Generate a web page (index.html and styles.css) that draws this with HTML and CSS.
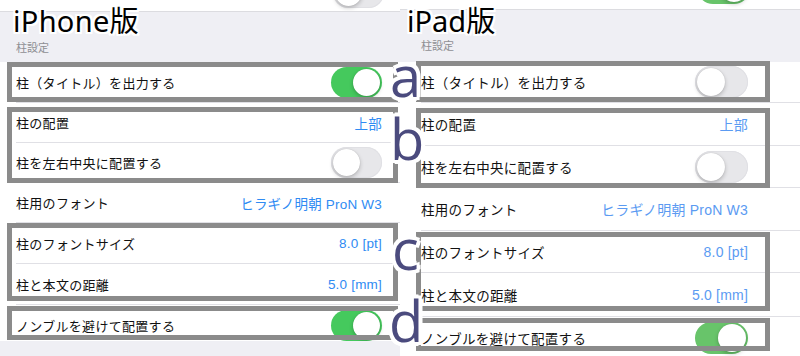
FILE: index.html
```html
<!DOCTYPE html>
<html lang="ja">
  <head>
    <meta charset="UTF-8" />
    <meta name="viewport" content="width=device-width, initial-scale=1.0" />
    <title>柱設定 iPhone / iPad</title>
    <link rel="stylesheet" href="styles.css">
  </head>
  <body>
    <div class="page">
      <section class="panel phone">
        <div class="peek"><span class="toggle off"></span></div>
        <div class="group-head">柱設定</div>
        <ul class="rows">
          <li class="row"><div class="cell"><span>柱（タイトル）を出力する</span><span class="toggle on"></span></div></li>
          <li class="row"><div class="cell"><span>柱の配置</span><span class="value">上部</span></div></li>
          <li class="row"><div class="cell"><span>柱を左右中央に配置する</span><span class="toggle off"></span></div></li>
          <li class="row"><div class="cell"><span>柱用のフォント</span><span class="value">ヒラギノ明朝 ProN W3</span></div></li>
          <li class="row"><div class="cell"><span>柱のフォントサイズ</span><span class="value">8.0 [pt]</span></div></li>
          <li class="row"><div class="cell"><span>柱と本文の距離</span><span class="value">5.0 [mm]</span></div></li>
          <li class="row"><div class="cell"><span>ノンブルを避けて配置する</span><span class="toggle on"></span></div></li>
        </ul>
      </section>

      <section class="panel tablet">
        <div class="peek"><span class="toggle on"></span></div>
        <div class="group-head">柱設定</div>
        <ul class="rows">
          <li class="row"><div class="cell"><span>柱（タイトル）を出力する</span><span class="toggle off"></span></div></li>
          <li class="row"><div class="cell"><span>柱の配置</span><span class="value">上部</span></div></li>
          <li class="row"><div class="cell"><span>柱を左右中央に配置する</span><span class="toggle off"></span></div></li>
          <li class="row"><div class="cell"><span>柱用のフォント</span><span class="value">ヒラギノ明朝 ProN W3</span></div></li>
          <li class="row"><div class="cell"><span>柱のフォントサイズ</span><span class="value">8.0 [pt]</span></div></li>
          <li class="row"><div class="cell"><span>柱と本文の距離</span><span class="value">5.0 [mm]</span></div></li>
          <li class="row"><div class="cell"><span>ノンブルを避けて配置する</span><span class="toggle on"></span></div></li>
        </ul>
      </section>

      <!-- annotation layer drawn over both screenshots -->
      <div class="marks">
        <div class="title title-phone">iPhone版</div>
        <div class="title title-tablet">iPad版</div>

        <div class="box box-pa"></div>
        <div class="box box-pb"></div>
        <div class="box box-pc"></div>
        <div class="box box-pd"></div>
        <div class="box box-ta"></div>
        <div class="box box-tb"></div>
        <div class="box box-tc"></div>
        <div class="box box-td"></div>

        <span class="letter letter-a">a</span>
        <span class="letter letter-b">b</span>
        <span class="letter letter-c">c</span>
        <span class="letter letter-d">d</span>
      </div>
    </div>
  </body>
</html>
```

FILE: styles.css
```css
* {
  box-sizing: border-box;
}
body {
  margin: 0;
  width: 800px;
  height: 356px;
  overflow: hidden;
  font-family: "Liberation Sans", "Noto Sans CJK JP", sans-serif;
  color: #111;
  background: #efeff4;
}
.page {
  position: relative;
  display: flex;
  width: 800px;
  height: 356px;
}
.panel {
  width: 400px;
  height: 356px;
  background: #efeff4;
  overflow: hidden;
}

/* row peeking in at the top */
.peek {
  position: relative;
  background: #fff;
  border-bottom: 1px solid #dcdce0;
  overflow: hidden;
}
.phone .peek {
  height: 12px;
}
.tablet .peek {
  height: 10px;
}
.peek .toggle {
  position: absolute;
}
.phone .peek .toggle {
  left: 333px;
  bottom: 3px;
}
.tablet .peek .toggle {
  left: 297px;
  bottom: 5px;
}

.group-head {
  display: flex;
  align-items: flex-end;
  font-size: 11px;
  line-height: 14px;
  color: #8e8e93;
}
.phone .group-head {
  height: 50px;
  padding: 0 0 7px 16px;
}
.tablet .group-head {
  height: 52px;
  padding: 0 0 9px 21px;
}

.rows {
  list-style: none;
  margin: 0;
  padding: 0;
  background: #fff;
}
/* the iPhone shot is cut off just under the last row */
.phone .rows {
  height: 279px;
  overflow: hidden;
}
.row {
  display: flex;
}
.cell {
  flex: 1;
  display: flex;
  align-items: center;
  justify-content: space-between;
  border-bottom: 1px solid #e0e0e5;
}
.phone .row {
  padding-left: 16px;
  font-size: 13px;
  letter-spacing: 0.3px;
}
.phone .cell {
  padding-right: 18px;
}
.tablet .row {
  padding-left: 21px;
  font-size: 13.5px;
  letter-spacing: 0.3px;
}
.tablet .cell {
  padding-right: 52px;
}

.phone .row:nth-child(1) { height: 41px; }
.phone .row:nth-child(2) { height: 40px; }
.phone .row:nth-child(3) { height: 40px; }
.phone .row:nth-child(4) { height: 40px; }
.phone .row:nth-child(5) { height: 41px; }
.phone .row:nth-child(6) { height: 41px; }
.phone .row:nth-child(7) { height: 42px; }

.tablet .row:nth-child(1) { height: 41px; }
.tablet .row:nth-child(2) { height: 43px; }
.tablet .row:nth-child(3) { height: 42px; }
.tablet .row:nth-child(4) { height: 43px; }
.tablet .row:nth-child(5) { height: 42px; }
.tablet .row:nth-child(6) { height: 44px; }
.tablet .row:nth-child(7) { height: 42px; }

.value {
  color: #2f8bf3;
  font-size: 13.5px;
  letter-spacing: 0.2px;
}
.tablet .value {
  color: #5b9bf2;
  font-size: 14px;
}

/* switches */
.toggle {
  display: flex;
  flex: none;
  width: 51px;
  height: 31px;
  padding: 2px;
  border-radius: 16px;
}
.tablet .toggle {
  width: 53px;
  height: 32px;
}
.toggle::before {
  content: "";
  width: 27px;
  height: 27px;
  border-radius: 50%;
  background: #fff;
  box-shadow: 0 2px 4px rgba(0, 0, 0, 0.22), 0 0 1px rgba(0, 0, 0, 0.2);
}
.tablet .toggle::before {
  width: 28px;
  height: 28px;
}
.toggle.on {
  justify-content: flex-end;
  background: #45c95d;
}
.tablet .toggle.on {
  background: #68c46a;
}
.toggle.off {
  background: #e7e7ea;
  box-shadow: inset 0 0 0 1px #e0e0e4;
}

/* annotations */
.marks {
  position: absolute;
  left: 0;
  top: 0;
  width: 800px;
  height: 356px;
  pointer-events: none;
}
.title {
  position: absolute;
  top: 6px;
  font-family: "Noto Sans", "Noto Sans CJK JP", sans-serif;
  font-size: 29px;
  line-height: 1;
  color: #000;
  text-shadow: 2px 0 #fff, -2px 0 #fff, 0 2px #fff, 0 -2px #fff,
    2px 2px #fff, -2px -2px #fff, 2px -2px #fff, -2px 2px #fff;
}
.title-phone {
  left: 13px;
  letter-spacing: 0.3px;
}
.title-tablet {
  left: 407px;
}

.box {
  position: absolute;
  border: 5px solid #8b8b8b;
}
.box-pa { left: 7px; top: 62px; width: 391px; height: 40px; }
.box-pb { left: 7px; top: 107px; width: 391px; height: 76px; }
.box-pc { left: 7px; top: 223px; width: 391px; height: 78px; }
.box-pd { left: 7px; top: 306px; width: 391px; height: 34px; }
.box-ta { left: 416px; top: 61px; width: 354px; height: 41px; }
.box-tb { left: 416px; top: 108px; width: 354px; height: 80px; }
.box-tc { left: 416px; top: 232px; width: 354px; height: 79px; }
.box-td { left: 416px; top: 318px; width: 354px; height: 33px; }

.letter {
  position: absolute;
  font-family: "Open Sans", sans-serif;
  font-size: 56px;
  line-height: 1;
  color: #4b4b7e;
  text-shadow: 4px 0 #fff, -4px 0 #fff, 0 4px #fff, 0 -4px #fff,
    3px 3px #fff, -3px -3px #fff, 3px -3px #fff, -3px 3px #fff,
    2px 0 #fff, -2px 0 #fff, 0 2px #fff, 0 -2px #fff;
}
.letter-a { left: 390px; top: 47px; }
.letter-b { left: 390px; top: 110px; }
.letter-c { left: 392px; top: 220px; }
.letter-d { left: 389px; top: 292px; }
```
